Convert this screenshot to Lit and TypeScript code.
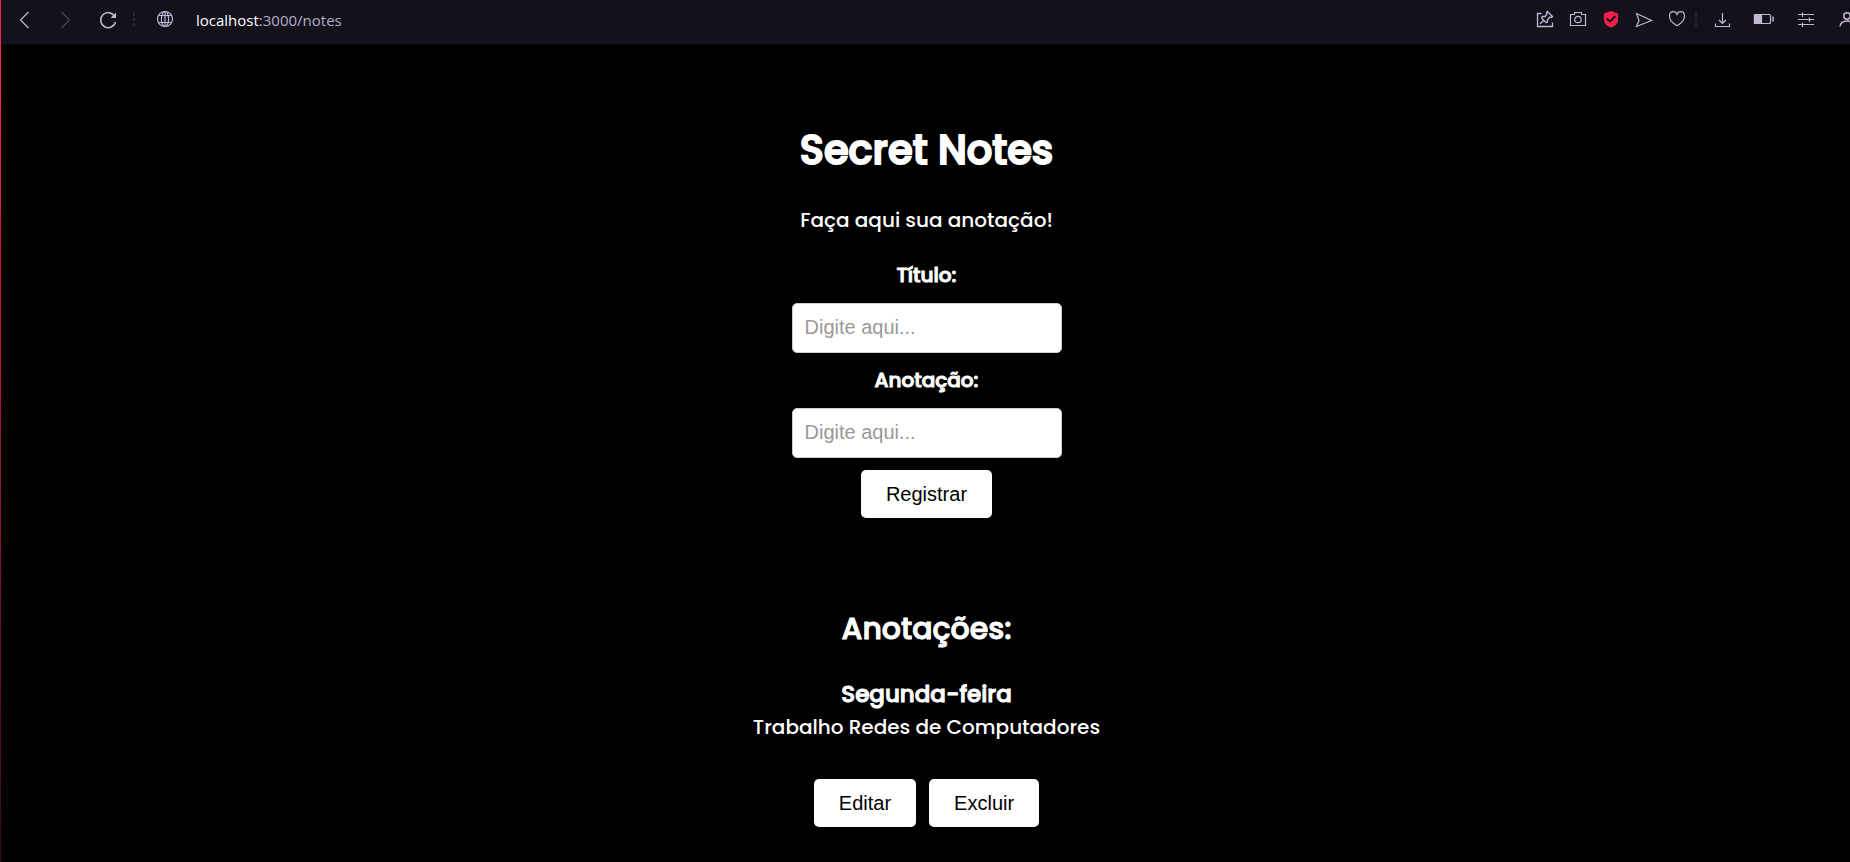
import { LitElement, html, css, svg } from "lit";
import { customElement, property, state } from "lit/decorators.js";

interface Note {
  id: number;
  title: string;
  text: string;
}

@customElement("browser-bar")
class BrowserBar extends LitElement {
  @property() host = "";
  @property() path = "";

  static styles = css`
    :host {
      display: flex;
      align-items: center;
      justify-content: space-between;
      box-sizing: border-box;
      height: 45px;
      padding: 0 0 4px 11px;
      border-bottom: 1px solid #0a0910;
      background: #13111a;
      color: #c3b7d6;
      overflow: hidden;
    }
    .group {
      display: flex;
      align-items: center;
    }
    button {
      display: block;
      margin: 0;
      padding: 0;
      border: 0;
      background: none;
      color: inherit;
    }
    svg {
      display: block;
      fill: none;
      stroke: currentColor;
      stroke-width: 1.2;
    }
    .nav {
      gap: 18px;
    }
    .nav button:disabled {
      color: #4b4657;
    }
    .dots {
      color: #2a2638;
    }
    .nav .dots {
      margin-left: -8px;
    }
    .site {
      gap: 19px;
      margin-left: 15px;
    }
    .url {
      font: 15px/24px "Open Sans", "Noto Sans", sans-serif;
      color: #b8acca;
      text-decoration: none;
    }
    .url b {
      font-weight: 400;
      color: #fff;
    }
    .tools {
      gap: 9px;
      margin-right: -9px;
    }
    .tools .dots {
      margin-left: -6px;
    }
    .menu {
      gap: 17px;
      margin-left: 3px;
    }
  `;

  private icon(label: string, shape: unknown, disabled = false) {
    return html`<button aria-label=${label} ?disabled=${disabled}>
      <svg width="24" height="24" viewBox="0 0 24 24">${shape}</svg>
    </button>`;
  }

  private dots() {
    return html`<svg class="dots" width="8" height="24" viewBox="0 0 8 24">
      <path d="M4 5v3M4 10v3M4 15v3" stroke-width="2" />
    </svg>`;
  }

  render() {
    return html`
      <div class="group">
        <div class="group nav">
          ${this.icon("Voltar", svg`<path d="M16.500 4L8.500 12L16.500 20"/>`)}
          ${this.icon("Avançar", svg`<path d="M7.500 4L15.500 12L7.500 20"/>`, true)}
          ${this.icon("Recarregar", svg`<path d="M18.500 8A7.500 7.500 0 1 0 19.500 14" stroke-width="1.500"/><path d="M20 4.500V10H14.500z" fill="currentColor" stroke="none"/>`)}
          ${this.dots()}
        </div>
        <div class="group site">
          ${this.icon("Informações do site", svg`<circle cx="12" cy="11" r="7.500"/><ellipse cx="12" cy="11" rx="3.600" ry="7.500"/><path d="M12 3.500v15M5.500 7.500h13M5.500 14.500h13"/>`)}
          <a class="url" href="#"><b>${this.host}</b>${this.path}</a>
        </div>
      </div>
      <div class="group tools">
        ${this.icon("Fixar", svg`<path d="M8.500 5.500H4.500V18.500H19.500V14.500" stroke-width="1.300"/><path d="M14.500 3.500L19.500 8.500L18.500 9.500L17 9L14.500 11.500L14.500 14L13 14.500L8.500 10L9.500 8.500L12 8.500L14 6L13.500 4.500zM10.700 12.300L7 16" stroke-width="1.300"/>`)}
        ${this.icon("Captura", svg`<path d="M4.500 6.500H8.500V4.500H15.500V6.500H19.500V17.500H4.500z"/><circle cx="12" cy="11.500" r="3.200"/>`)}
        ${this.icon("Proteção", svg`<path d="M12 3L19 5.500V12C19 15.500 16 18 12 19.500C8 18 5 15.500 5 12V5.500z" fill="#fa1e4e" stroke="none"/><path d="M7.500 10.500L11 13.500L16.500 8" stroke="#13111a" stroke-width="2"/>`)}
        ${this.icon("Enviar", svg`<path d="M4.500 5.500L19.500 12.500L4.500 18.500L7 12.500z"/>`)}
        ${this.icon("Favoritar", svg`<path d="M12 17.800C8 15.500 4.500 12 4.500 8C4.500 5.200 6.300 3.700 8.300 3.700C10 3.700 11.500 4.700 12 6.200C12.500 4.700 14 3.700 15.700 3.700C17.700 3.700 19.500 5.200 19.500 8C19.500 12 16 15.500 12 17.800z"/>`)}
        ${this.dots()}
        <div class="group menu">
          ${this.icon("Downloads", svg`<path d="M10.500 5V15.500M7 12L10.500 15.500L14 12M3.500 15.500V18.500H17.500V15.500"/>`)}
          ${this.icon("Bateria", svg`<rect x="1.500" y="6.500" width="16" height="9" rx="1"/><path d="M1.500 6.500H8.500V15.500H1.500z" fill="currentColor"/><path d="M20 8.500V13.500" stroke-width="1.500"/>`)}
          ${this.icon("Configurações", svg`<path d="M4 6.500H20M4 11.500H20M4 16.500H20M8.500 4.500V9M15.500 9.500V14M8.500 14.500V19"/>`)}
          ${this.icon("Perfil", svg`<circle cx="12" cy="8" r="3.200" stroke-width="1.500"/><path d="M5 18.500C5.500 14.500 8.500 13 12 13S18.500 14.500 19 18.500" stroke-width="1.500"/>`)}
        </div>
      </div>
    `;
  }
}

@customElement("app-root")
class AppRoot extends LitElement {
  @state() private notes: Note[] = [
    { id: 1, title: "Segunda-feira", text: "Trabalho Redes de Computadores" },
  ];

  static styles = css`
    :host {
      display: block;
      box-sizing: border-box;
      min-height: 100vh;
      border-left: 1px solid;
      border-image: linear-gradient(#fa1e4e, #fa1e4e 10%, #36091a) 1;
      background: #000;
      color: #fff;
      font: 500 20px/30px Poppins, Inter, sans-serif;
    }
    main {
      display: flex;
      flex-direction: column;
      align-items: center;
      padding: 75px 0 32px 2px;
      text-align: center;
    }
    h1,
    h2,
    h3,
    p {
      margin: 0;
    }
    h1,
    h2,
    h3,
    label {
      font-weight: 500;
      -webkit-text-stroke: 1px currentColor;
    }
    h1 {
      font-size: 40px;
      line-height: 60px;
      -webkit-text-stroke-width: 2px;
    }
    h2 {
      margin-top: 87px;
      font-size: 30px;
      line-height: 48px;
    }
    h3 {
      font-size: 23px;
      line-height: 35px;
    }
    .intro {
      margin: 25px 0;
    }
    form {
      display: flex;
      flex-direction: column;
      align-items: center;
      gap: 12px;
    }
    label {
      line-height: 31px;
    }
    input,
    button {
      box-sizing: border-box;
      border-radius: 5px;
      background: #fff;
      font: 20px/24px "Liberation Sans", Arial, sans-serif;
    }
    input {
      width: 270px;
      height: 50px;
      padding: 11px 12px 13px;
      border: 1px solid #ccc;
    }
    input::placeholder {
      color: #999;
      opacity: 1;
    }
    button {
      padding: 12px 25px;
      border: 0;
      color: #000;
    }
    .note {
      margin-top: 24px;
    }
    .actions {
      display: flex;
      justify-content: center;
      gap: 13px;
      margin-top: 37px;
    }
  `;

  private add(e: Event) {
    e.preventDefault();
    const form = e.target as HTMLFormElement;
    const data = new FormData(form);
    const title = String(data.get("title"));
    const text = String(data.get("text"));
    if (!title || !text) return;
    this.notes = [...this.notes, { id: Date.now(), title, text }];
    form.reset();
  }

  private remove(id: number) {
    this.notes = this.notes.filter((n) => n.id !== id);
  }

  render() {
    return html`
      <browser-bar host="localhost" path=":3000/notes"></browser-bar>
      <main>
        <h1>Secret Notes</h1>
        <p class="intro">Faça aqui sua anotação!</p>
        <form @submit=${this.add}>
          <label for="title">Título:</label>
          <input id="title" name="title" placeholder="Digite aqui..." />
          <label for="text">Anotação:</label>
          <input id="text" name="text" placeholder="Digite aqui..." />
          <button type="submit">Registrar</button>
        </form>
        <h2>Anotações:</h2>
        ${this.notes.map(
          (n) => html`<article class="note">
            <h3>${n.title}</h3>
            <p>${n.text}</p>
            <div class="actions">
              <button type="button">Editar</button>
              <button type="button" @click=${() => this.remove(n.id)}>Excluir</button>
            </div>
          </article>`
        )}
      </main>
    `;
  }
}
